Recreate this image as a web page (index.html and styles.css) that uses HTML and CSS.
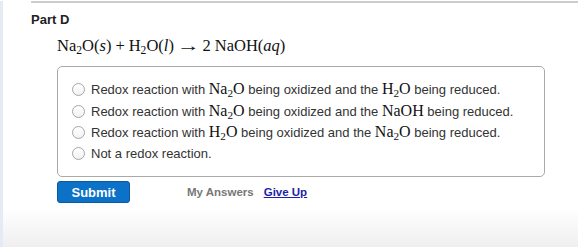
FILE: index.html
```html
<!DOCTYPE html>
<html lang="en">
<head>
  <meta charset="UTF-8" />
  <title>Part D</title>
  <link rel="stylesheet" href="styles.css">
</head>
<body>
  <div class="page">
    <div class="part">
      <h3 class="part-title">Part D</h3>

      <p class="equation">Na<sub>2</sub>O(<i>s</i>)<span class="op">+</span>H<sub>2</sub>O(<i>l</i>)<span class="op arrow">&rarr;</span>2 NaOH(<i>aq</i>)</p>

      <div class="choices">
        <label class="choice"><span class="radio"></span>Redox reaction with <span class="m">Na<sub>2</sub>O</span> being oxidized and the <span class="m">H<sub>2</sub>O</span> being reduced.</label>
        <label class="choice"><span class="radio"></span>Redox reaction with <span class="m">Na<sub>2</sub>O</span> being oxidized and the <span class="m">NaOH</span> being reduced.</label>
        <label class="choice"><span class="radio"></span>Redox reaction with <span class="m">H<sub>2</sub>O</span> being oxidized and the <span class="m">Na<sub>2</sub>O</span> being reduced.</label>
        <label class="choice"><span class="radio"></span>Not a redox reaction.</label>
      </div>

      <div class="actions">
        <button class="submit">Submit</button>
        <span class="my-answers">My Answers</span>
        <a class="give-up" href="#">Give Up</a>
      </div>
    </div>
  </div>
</body>
</html>
```

FILE: styles.css
```css
html, body {
  margin: 0;
  padding: 0;
}
body {
  font-family: "Liberation Sans", Arial, Helvetica, sans-serif;
  color: #333;
  background: linear-gradient(to bottom, #fff 0, #fff 208px, #efefef 247px);
  height: 247px;
  overflow: hidden;
}
.page {
  border-left: 3px solid #e4ebf4;
  height: 247px;
  padding-left: 28px;
}
.part {
  border-top: 2px solid #cdcdcd;
  margin-top: 1px;
}
.part-title {
  margin: 0;
  padding-top: 9px;
  font-size: 13px;
  font-weight: bold;
  color: #222;
  line-height: 15px;
}
.equation {
  margin: 9px 0 0 26px;
  font-family: "Liberation Serif", "Times New Roman", serif;
  font-size: 16.5px;
  color: #111;
  line-height: 20px;
}
.op {
  margin: 0 4px;
}
.arrow {
  display: inline-block;
  transform: scaleX(1.4);
  margin: 0 6px;
}
.equation sub, .m sub {
  font-size: 70%;
  vertical-align: -3px;
  line-height: 0;
}
.choices {
  margin: 10px 0 0 26px;
  width: 488px;
  height: 111px;
  box-sizing: border-box;
  border: 1px solid #a9a9a9;
  border-radius: 5px;
  padding: 11px 0 0 14px;
}
.choice {
  display: block;
  height: 21.7px;
  line-height: 21.7px;
  font-size: 13px;
  color: #333;
  white-space: nowrap;
}
.radio {
  display: inline-block;
  vertical-align: -2px;
  width: 11px;
  height: 11px;
  border: 1px solid #a6a6a6;
  border-radius: 50%;
  background: linear-gradient(#fff, #f2f2f2);
  margin-right: 6px;
}
.m {
  font-family: "Liberation Serif", "Times New Roman", serif;
  font-size: 16px;
  color: #111;
}
.actions {
  display: flex;
  align-items: center;
  margin: 4px 0 0 26px;
  font-size: 11.5px;
  font-weight: bold;
}
.submit {
  width: 73px;
  height: 22px;
  background: #0b72c8;
  border: 1px solid #0a5aa0;
  border-radius: 3px;
  color: #fff;
  font-family: inherit;
  font-size: 13px;
  font-weight: bold;
  padding: 0;
}
.my-answers {
  color: #777;
  margin-left: 57px;
}
.give-up {
  color: #1d1fa8;
  margin-left: 10px;
  text-decoration: underline;
}
```
